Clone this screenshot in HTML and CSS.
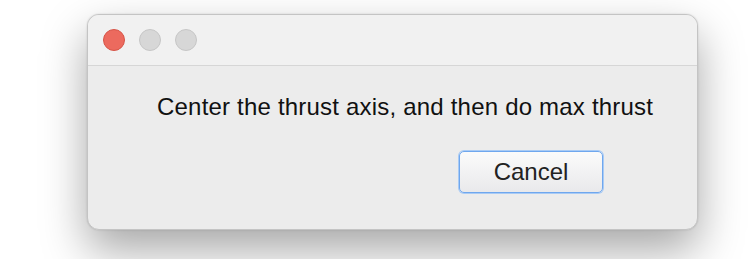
FILE: index.html
```html
<!DOCTYPE html>
<html lang="en">
<head>
    <meta charset="UTF-8">
    <title>Message</title>
    <link rel="stylesheet" href="styles.css">
</head>
<body>
    <div class="window">
        <div class="titlebar">
            <span class="light close"></span>
            <span class="light"></span>
            <span class="light"></span>
        </div>
        <div class="content">
            <p class="message">Center the thrust axis, and then do max thrust</p>
            <div class="actions">
                <button class="btn">Cancel</button>
            </div>
        </div>
    </div>
</body>
</html>
```

FILE: styles.css
```css
html, body {
    height: 100%;
}
body {
    margin: 0;
    padding: 14px 0 0 87px;
    box-sizing: border-box;
    background-color: #ffffff;
    font-family: "Liberation Sans", Arial, sans-serif;
    overflow: hidden;
}
.window {
    width: 609px;
    height: 214px;
    border: 1px solid #c4c4c4;
    border-radius: 12px;
    background-color: #ececec;
    box-shadow: 0 20px 45px rgba(0, 0, 0, 0.35), 0 0 2px rgba(0, 0, 0, 0.15);
    overflow: hidden;
}
.titlebar {
    height: 50px;
    display: flex;
    align-items: center;
    gap: 14px;
    padding-left: 15px;
    background-color: #f1f1f1;
    border-bottom: 1px solid #d6d6d6;
}
.light {
    width: 20px;
    height: 20px;
    border-radius: 50%;
    background-color: #d7d7d7;
    border: 1px solid #c6c6c6;
}
.light.close {
    background-color: #ec6a5e;
    border-color: #d65447;
}
.content {
    padding: 27px 0 0 69px;
}
.message {
    margin: 0;
    font-size: 24px;
    line-height: 28px;
    letter-spacing: 0.2px;
    color: #111111;
}
.actions {
    display: flex;
    justify-content: flex-end;
    padding-right: 94px;
    margin-top: 30px;
}
.btn {
    width: 144px;
    height: 42px;
    padding: 0;
    font-family: "Liberation Sans", Arial, sans-serif;
    font-size: 24px;
    color: #222222;
    background: linear-gradient(#fbfbfb, #e9e9eb);
    border: 1px solid #6fa7ee;
    border-radius: 5px;
    box-shadow: 0 0 0 1px #a9cbf5;
}
```
